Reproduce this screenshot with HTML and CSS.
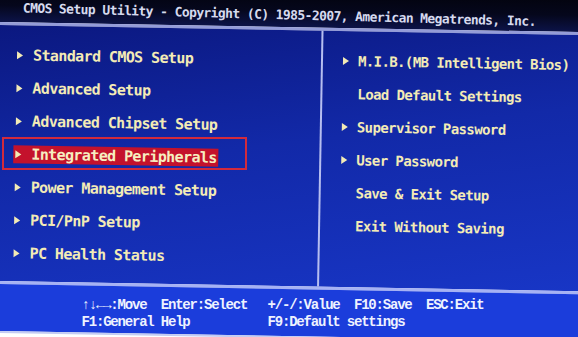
FILE: index.html
```html
<!DOCTYPE html>
<html lang="en">
<head>
    <meta charset="UTF-8">
    <meta name="viewport" content="width=device-width, initial-scale=1.0">
    <title>CMOS Setup Utility</title>
    <link rel="stylesheet" href="styles.css">
</head>
<body>

<!-- Man hinh BIOS (chup hoi nghieng) -->
<div class="screen">
    <div class="titlebar">
        <span class="title">CMOS Setup Utility - Copyright (C) 1985-2007, American Megatrends, Inc.</span>
    </div>
    <div class="rule rule-top"></div>

    <div class="main">
        <ul class="menu menu-left">
            <li class="item"><span class="entry"><i class="arrow"></i>Standard CMOS Setup</span></li>
            <li class="item"><span class="entry"><i class="arrow"></i>Advanced Setup</span></li>
            <li class="item"><span class="entry"><i class="arrow"></i>Advanced Chipset Setup</span></li>
            <li class="item"><span class="entry active"><i class="arrow"></i>Integrated Peripherals</span></li>
            <li class="item"><span class="entry"><i class="arrow"></i>Power Management Setup</span></li>
            <li class="item"><span class="entry"><i class="arrow"></i>PCI/PnP Setup</span></li>
            <li class="item"><span class="entry"><i class="arrow"></i>PC Health Status</span></li>
        </ul>

        <div class="divider"></div>

        <ul class="menu menu-right">
            <li class="item"><span class="entry"><i class="arrow"></i>M.I.B.(MB Intelligent Bios)</span></li>
            <li class="item"><span class="entry"><i class="arrow blank"></i>Load Default Settings</span></li>
            <li class="item"><span class="entry"><i class="arrow"></i>Supervisor Password</span></li>
            <li class="item"><span class="entry"><i class="arrow"></i>User Password</span></li>
            <li class="item"><span class="entry"><i class="arrow blank"></i>Save &amp; Exit Setup</span></li>
            <li class="item"><span class="entry"><i class="arrow blank"></i>Exit Without Saving</span></li>
        </ul>
    </div>

    <div class="rule rule-mid"></div>

    <!-- Phim tat -->
    <div class="footer">
        <div class="keys">
            <span>↑↓←→:Move  Enter:Select</span>
            <span>+/-/:Value  F10:Save  ESC:Exit</span>
            <span>F1:General Help</span>
            <span>F9:Default settings</span>
        </div>
    </div>
    <div class="rule rule-bottom"></div>
</div>

<!-- Khung do danh dau -->
<div class="mark"></div>

</body>
</html>
```

FILE: styles.css
```css
/* Trang */
body {
    margin: 0;
    background: #ffffff;
    overflow: hidden;
    height: 337px;
}

/* Man hinh, xoay nhe nhu anh chup */
.screen {
    width: 610px;
    margin-top: -20px;
    transform: rotate(1deg);
    transform-origin: 0 20px;
    font-family: "DejaVu Sans Mono", monospace;
    font-weight: bold;
}

/* Thanh tieu de */
.titlebar {
    height: 22px;
    padding: 20px 0 0 23px;
    background: linear-gradient(#020208, #05071c 60%, #0c1348);
    overflow: hidden;
}

.title {
    display: block;
    white-space: nowrap;
    font-size: 13px;
    letter-spacing: -0.6px;
    line-height: 16px;
    color: #d6daee;
    transform: rotate(0.5deg);
    transform-origin: 0 50%;
}

/* Cac duong ke */
.rule {
    height: 3px;
}

.rule-top {
    background: #949cd8;
}

.rule-mid {
    background: #a6b2f4;
}

.rule-bottom {
    height: 2px;
    background: #c4ccf2;
}

/* Vung menu */
.main {
    display: grid;
    grid-template-columns: 322px 2px 1fr;
    height: 256px;
    background: linear-gradient(172deg, #0b1880 0%, #1229a8 45%, #1836c6 100%);
}

.divider {
    background: #b6bef0;
}

.menu {
    list-style: none;
    margin: 0;
    padding: 13px 0 0 16px;
    color: #f3ebb6;
}

.menu-left {
    font-size: 15px;
    letter-spacing: -0.6px;
}

.menu-right {
    padding-left: 18px;
    font-size: 14px;
    letter-spacing: -0.6px;
}

.item {
    display: flex;
    align-items: center;
    height: 33px;
}

.entry {
    display: inline-flex;
    align-items: center;
    gap: 10px;
    height: 18px;
    padding: 0 2px;
    white-space: nowrap;
}

.menu-right .entry {
    gap: 9px;
}

.entry.active {
    background: #c4122c;
    color: #f6eec0;
}

/* Mui ten tam giac */
.arrow {
    width: 0;
    height: 0;
    border-left: 6px solid #f3ebb6;
    border-top: 4px solid transparent;
    border-bottom: 4px solid transparent;
}

.arrow.blank {
    visibility: hidden;
}

/* Chan trang */
.footer {
    height: 34px;
    padding: 12px 0 1px 87px;
    background: #1b3ddb;
}

.keys {
    display: grid;
    grid-template-columns: 186px auto;
    font-family: "Liberation Mono", monospace;
    font-weight: bold;
    font-size: 14px;
    letter-spacing: -1.2px;
    line-height: 17px;
    white-space: pre;
    color: #eef2ff;
    transform: rotate(-1deg);
    transform-origin: 0 50%;
}

/* Khung do */
.mark {
    position: absolute;
    left: 2px;
    top: 137px;
    width: 241px;
    height: 29px;
    border: 2px solid #d22a3c;
}
```
